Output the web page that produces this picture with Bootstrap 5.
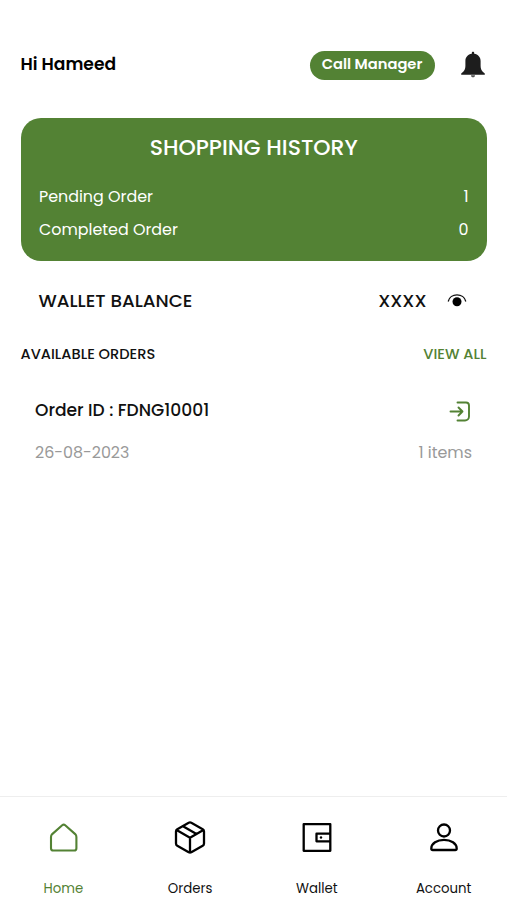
<!DOCTYPE html>
<html lang="en">
<head>
<meta charset="utf-8">
<meta name="viewport" content="width=device-width, initial-scale=1">
<title>Home</title>
<link href="https://cdn.jsdelivr.net/npm/bootstrap@5.3.0/dist/css/bootstrap.min.css" rel="stylesheet">
<style>
:root { --leaf: #538234; }
body { font-family: Poppins, Inter, "Open Sans", sans-serif; color: #111; background: #fff; white-space: nowrap; }
svg { display: block; flex: none; }
.leaf { color: var(--leaf); }
.screen { height: 900px; overflow: hidden; }
.topbar { height: 118px; padding: 12px 20px 0 20.5px; }
.greeting { font-size: 17.1px; font-weight: 600; color: #000; line-height: 24px; padding-bottom: 2px; }
.call { background: var(--leaf); width: 125px; height: 29px; font-size: 14.7px; font-weight: 600; border-radius: 15px; line-height: 25px; padding: 0 1px 2px 0; color: #fff; border: 0; }
.history { height: 143px; margin: 0 20px 0 20.5px; padding: 0 18.5px; border-radius: 20px; background: var(--leaf); color: #fff; font-size: 15.9px; }
.history h1 { font-size: 22px; font-weight: 500; line-height: 59px; height: 62px; margin: 0; }
.history .line { height: 33px; line-height: 33px; }
.wallet { height: 79px; padding: 0 36.5px 0 38.5px; font-size: 18.3px; font-weight: 500; }
.heading { height: 28px; padding: 2px 20.5px 0 20.5px; font-size: 14.6px; font-weight: 500; }
.order { padding: 21px 35px 0 35px; }
.order-id { height: 43px; font-size: 17.1px; font-weight: 500; padding-right: 1px; }
.order-info { height: 41px; font-size: 15.9px; color: #999; }
.tabs { height: 104px; border-top: 1px solid #eee; font-size: 13.3px; }
.tabs a { color: #111; text-decoration: none; padding-top: 23px; }
.tabs a.leaf { color: var(--leaf); }
.tabs span { line-height: 20px; margin-top: 23px; }
</style>
</head>
<body>
<div class="screen d-flex flex-column">
  <header class="topbar d-flex align-items-center">
    <span class="greeting me-auto">Hi Hameed</span>
    <button class="call">Call Manager</button>
    <svg class="ms-4" width="28" height="28" viewBox="0 0 28 28" fill="#1d1d1d"><path d="M14 .8c.8 0 1.200.5 1.200 1.300v.6c3.900.6 6.400 3.500 6.400 7.200v5.200c0 3 .9 5.200 4.200 7.300v1.300H2.200v-1.300c3.300-2.100 4.200-4.300 4.200-7.300V9.900c0-3.700 2.500-6.600 6.400-7.200v-.6c0-.8.400-1.300 1.200-1.300z"/><path d="M12 24.300h4c0 1.400-.8 2-2 2s-2-.6-2-2z" fill="#555"/></svg>
  </header>
  <section class="history">
    <h1 class="text-center">SHOPPING HISTORY</h1>
    <div class="line d-flex justify-content-between"><span>Pending Order</span><span>1</span></div>
    <div class="line d-flex justify-content-between"><span>Completed Order</span><span>0</span></div>
  </section>
  <section class="wallet d-flex align-items-center">
    <span class="me-auto">WALLET BALANCE</span><span>XXXX</span>
    <svg class="ms-3" width="28" height="24" viewBox="0 0 28 24"><path d="M5.200 12.500C7 3.700 21 3.700 22.800 12.500" fill="none" stroke="#111" stroke-width="1.300"/><circle cx="14" cy="12.800" r="4.500"/></svg>
  </section>
  <div class="heading d-flex align-items-center justify-content-between"><span>AVAILABLE ORDERS</span><span class="leaf">VIEW ALL</span></div>
  <article class="order mb-auto">
    <div class="order-id d-flex align-items-center justify-content-between"><span>Order ID : FDNG10001</span>
      <svg class="leaf" width="22" height="22" viewBox="0 0 22 22" fill="none" stroke="currentColor" stroke-width="1.900" stroke-linecap="round" stroke-linejoin="round"><path d="M8.500 2.500H17a3 3 0 0 1 3 3v11a4 4 0 0 1-4 4H8.500M1.500 11.500h12M9.500 7.500l4 4-4 4"/></svg></div>
    <div class="order-info d-flex align-items-center justify-content-between"><span>26-08-2023</span><span>1 items</span></div>
  </article>
  <nav class="tabs row g-0 text-center">
    <a href="#" class="col leaf d-flex flex-column align-items-center"><svg width="36" height="36" viewBox="0 0 36 36" fill="none" stroke="currentColor" stroke-width="2.100" stroke-linejoin="round"><path d="M17.200 5.200q1.500-1.300 3 0l10 8.900q1.200 1.200 1.200 2.800v11.300a2.300 2.300 0 0 1-2.300 2.300H8.300A2.300 2.300 0 0 1 6 28.200V16.900q0-1.600 1.200-2.800z"/></svg><span>Home</span></a>
    <a href="#" class="col d-flex flex-column align-items-center"><svg width="36" height="36" viewBox="0 0 36 36" fill="none" stroke="#000" stroke-width="2.300" stroke-linejoin="round" stroke-linecap="round"><path d="M16.700 2.800q1.300-.7 2.600 0l11.400 6.400q1.300.8 1.300 2.200v12q0 1.500-1.300 2.300l-11.400 6.500q-1.300.7-2.600 0L5.300 25.700Q4 24.900 4 23.400v-12q0-1.400 1.300-2.200zM4.600 10.100 18 17.700l13.400-7.600M18 17.700V32.500M11 6.300l13.500 7.700"/></svg><span>Orders</span></a>
    <a href="#" class="col d-flex flex-column align-items-center"><svg width="36" height="36" viewBox="0 0 36 36" fill="none" stroke="#000" stroke-width="2.300" stroke-linejoin="round"><path d="M4.700 4.200h26.600v26.600H4.700zM31.300 13.700H17.500v7.600h13.800"/><circle cx="22" cy="17.500" r="1.200" fill="#000" stroke="none"/></svg><span>Wallet</span></a>
    <a href="#" class="col d-flex flex-column align-items-center"><svg width="36" height="36" viewBox="0 0 36 36" fill="none" stroke="#000" stroke-width="2.300" stroke-linejoin="round"><circle cx="18" cy="10.500" r="6"/><path d="M5.300 28.500c0-5 5.700-8.700 12.700-8.700s12.700 3.700 12.700 8.700q0 1.500-1.500 1.500H6.800q-1.500 0-1.500-1.500z"/></svg><span>Account</span></a>
  </nav>
</div>
<script src="https://cdn.jsdelivr.net/npm/bootstrap@5.3.0/dist/js/bootstrap.bundle.min.js"></script>
</body>
</html>
